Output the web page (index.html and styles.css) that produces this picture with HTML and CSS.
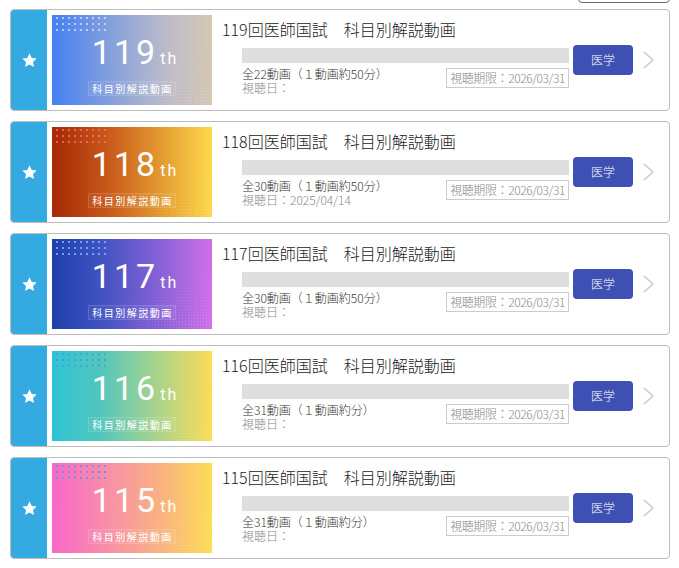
FILE: index.html
```html
<!DOCTYPE html>
<html lang="ja">
<head>
<meta charset="utf-8">
<title>科目別解説動画</title>
<link rel="stylesheet" href="styles.css">
</head>
<body>
<div class="toolbar"><div class="tool-btn"></div></div>
<ul class="list">
  <li class="card">
    <div class="fav"><svg viewBox="0 0 24 24" width="17" height="17"><path d="M12 1.8l3.1 6.6 7.1.8-5.3 4.9 1.4 7.1L12 17.6l-6.3 3.6 1.4-7.1L1.8 9.2l7.1-.8z" fill="#fff"/></svg></div>
    <div class="thumb t119">
      <div class="num">119<span class="th">th</span></div>
      <div class="label">科目別解説動画</div>
    </div>
    <div class="body">
      <div class="title">119回医師国試　科目別解説動画</div>
      <div class="row">
        <div class="main">
          <div class="bar"></div>
          <div class="info">
            <div class="meta">
              <div class="count">全22動画（１動画約50分）</div>
              <div class="viewed">視聴日：</div>
            </div>
            <div class="deadline">視聴期限：2026/03/31</div>
          </div>
        </div>
        <div class="btn">医学</div>
        <div class="chev"><svg viewBox="0 0 11 18" width="11" height="18"><polyline points="1,1 10,9 1,17" fill="none" stroke="#c9c9c9" stroke-width="1.5"/></svg></div>
      </div>
    </div>
  </li>
  <li class="card">
    <div class="fav"><svg viewBox="0 0 24 24" width="17" height="17"><path d="M12 1.8l3.1 6.6 7.1.8-5.3 4.9 1.4 7.1L12 17.6l-6.3 3.6 1.4-7.1L1.8 9.2l7.1-.8z" fill="#fff"/></svg></div>
    <div class="thumb t118">
      <div class="num">118<span class="th">th</span></div>
      <div class="label">科目別解説動画</div>
    </div>
    <div class="body">
      <div class="title">118回医師国試　科目別解説動画</div>
      <div class="row">
        <div class="main">
          <div class="bar"></div>
          <div class="info">
            <div class="meta">
              <div class="count">全30動画（１動画約50分）</div>
              <div class="viewed">視聴日：2025/04/14</div>
            </div>
            <div class="deadline">視聴期限：2026/03/31</div>
          </div>
        </div>
        <div class="btn">医学</div>
        <div class="chev"><svg viewBox="0 0 11 18" width="11" height="18"><polyline points="1,1 10,9 1,17" fill="none" stroke="#c9c9c9" stroke-width="1.5"/></svg></div>
      </div>
    </div>
  </li>
  <li class="card">
    <div class="fav"><svg viewBox="0 0 24 24" width="17" height="17"><path d="M12 1.8l3.1 6.6 7.1.8-5.3 4.9 1.4 7.1L12 17.6l-6.3 3.6 1.4-7.1L1.8 9.2l7.1-.8z" fill="#fff"/></svg></div>
    <div class="thumb t117">
      <div class="num">117<span class="th">th</span></div>
      <div class="label">科目別解説動画</div>
    </div>
    <div class="body">
      <div class="title">117回医師国試　科目別解説動画</div>
      <div class="row">
        <div class="main">
          <div class="bar"></div>
          <div class="info">
            <div class="meta">
              <div class="count">全30動画（１動画約50分）</div>
              <div class="viewed">視聴日：</div>
            </div>
            <div class="deadline">視聴期限：2026/03/31</div>
          </div>
        </div>
        <div class="btn">医学</div>
        <div class="chev"><svg viewBox="0 0 11 18" width="11" height="18"><polyline points="1,1 10,9 1,17" fill="none" stroke="#c9c9c9" stroke-width="1.5"/></svg></div>
      </div>
    </div>
  </li>
  <li class="card">
    <div class="fav"><svg viewBox="0 0 24 24" width="17" height="17"><path d="M12 1.8l3.1 6.6 7.1.8-5.3 4.9 1.4 7.1L12 17.6l-6.3 3.6 1.4-7.1L1.8 9.2l7.1-.8z" fill="#fff"/></svg></div>
    <div class="thumb t116">
      <div class="num">116<span class="th">th</span></div>
      <div class="label">科目別解説動画</div>
    </div>
    <div class="body">
      <div class="title">116回医師国試　科目別解説動画</div>
      <div class="row">
        <div class="main">
          <div class="bar"></div>
          <div class="info">
            <div class="meta">
              <div class="count">全31動画（１動画約分）</div>
              <div class="viewed">視聴日：</div>
            </div>
            <div class="deadline">視聴期限：2026/03/31</div>
          </div>
        </div>
        <div class="btn">医学</div>
        <div class="chev"><svg viewBox="0 0 11 18" width="11" height="18"><polyline points="1,1 10,9 1,17" fill="none" stroke="#c9c9c9" stroke-width="1.5"/></svg></div>
      </div>
    </div>
  </li>
  <li class="card">
    <div class="fav"><svg viewBox="0 0 24 24" width="17" height="17"><path d="M12 1.8l3.1 6.6 7.1.8-5.3 4.9 1.4 7.1L12 17.6l-6.3 3.6 1.4-7.1L1.8 9.2l7.1-.8z" fill="#fff"/></svg></div>
    <div class="thumb t115">
      <div class="num">115<span class="th">th</span></div>
      <div class="label">科目別解説動画</div>
    </div>
    <div class="body">
      <div class="title">115回医師国試　科目別解説動画</div>
      <div class="row">
        <div class="main">
          <div class="bar"></div>
          <div class="info">
            <div class="meta">
              <div class="count">全31動画（１動画約分）</div>
              <div class="viewed">視聴日：</div>
            </div>
            <div class="deadline">視聴期限：2026/03/31</div>
          </div>
        </div>
        <div class="btn">医学</div>
        <div class="chev"><svg viewBox="0 0 11 18" width="11" height="18"><polyline points="1,1 10,9 1,17" fill="none" stroke="#c9c9c9" stroke-width="1.5"/></svg></div>
      </div>
    </div>
  </li>
</ul>
</body>
</html>
```
FILE: styles.css
```css
html, body {
  margin: 0;
  padding: 0;
  background: #fff;
}
body {
  padding: 0 9px 0 10px;
  font-family: "Noto Sans CJK JP", "Noto Sans", sans-serif;
  font-weight: 300;
  color: #333;
}
.toolbar {
  height: 3px;
  display: flex;
  justify-content: flex-end;
}
.tool-btn {
  width: 92px;
  height: 30px;
  margin-top: -27px;
  box-sizing: border-box;
  border: 1px solid #666;
  border-radius: 4px;
}
.list {
  list-style: none;
  margin: 6px 0 0;
  padding: 0;
}
.card {
  display: flex;
  height: 102px;
  box-sizing: border-box;
  border: 1px solid #bdbdbd;
  border-radius: 4px;
  overflow: hidden;
  margin-bottom: 10px;
}
.fav {
  width: 36px;
  flex: none;
  background: #35aae1;
  display: flex;
  align-items: center;
  justify-content: center;
}
.fav svg { display: block; }
.thumb {
  position: relative;
  flex: none;
  width: 160px;
  height: 90px;
  margin: 5px 0 0 5px;
  overflow: hidden;
  display: flex;
  flex-direction: column;
  align-items: center;
  padding-top: 20px;
  box-sizing: border-box;
  color: #fff;
}
.thumb::before {
  content: "";
  position: absolute;
  left: 2px;
  top: 0;
  width: 52px;
  height: 17px;
  background-image: radial-gradient(circle, var(--dot) 0.8px, transparent 1.1px);
  background-size: 6px 6px;
  background-position: 0 0;
}
.thumb::after {
  content: "";
  position: absolute;
  right: 0;
  bottom: 0;
  width: 100px;
  height: 60px;
  background-image: radial-gradient(circle, rgba(255,255,255,0.22) 0.7px, transparent 1px);
  background-size: 3px 3px;
  -webkit-mask-image: radial-gradient(ellipse at 80% 100%, #000 0%, transparent 70%);
  mask-image: radial-gradient(ellipse at 80% 100%, #000 0%, transparent 70%);
}
.t119 {
  background: linear-gradient(90deg, #4580f2 0%, #8aa3da 40%, #bcbcc8 72%, #d6c7b3 100%);
  --dot: rgba(255,255,255,0.55);
}
.t118 {
  background: linear-gradient(90deg, #a42804 0%, #c8591a 35%, #e39a30 68%, #fdd94b 100%);
  --dot: rgba(255,110,110,0.75);
}
.t117 {
  background: linear-gradient(90deg, #1e3fab 0%, #3f52c0 30%, #8260d6 65%, #d070e8 100%);
  --dot: rgba(120,170,255,0.9);
}
.t116 {
  background: linear-gradient(90deg, #2ec3d6 0%, #52c6bd 30%, #a7d38c 65%, #fbdc56 100%);
  --dot: rgba(70,140,230,0.6);
}
.t115 {
  background: linear-gradient(90deg, #f868c8 0%, #f88fa8 35%, #f9b280 68%, #fddc55 100%);
  --dot: rgba(90,150,240,0.85);
}
.num {
  position: relative;
  z-index: 1;
  font-family: Roboto, "Noto Sans", sans-serif;
  font-weight: 400;
  font-size: 34px;
  line-height: 34px;
  letter-spacing: 3px;
  margin-left: 6px;
}
.th {
  font-size: 16px;
  letter-spacing: 2px;
  margin-left: 2px;
}
.label {
  position: relative;
  z-index: 1;
  margin-top: 5px;
  height: 15px;
  box-sizing: border-box;
  padding: 0 2px 0 3px;
  font-size: 10px;
  font-weight: 400;
  line-height: 13px;
  letter-spacing: 1.5px;
  border: 1px solid rgba(255,255,255,0.13);
  background: rgba(255,255,255,0.05);
}
.body {
  flex: 1;
  padding: 8px 0 0 10px;
  min-width: 0;
}
.title {
  font-size: 16px;
  line-height: 22px;
  color: #222;
  white-space: nowrap;
}
.row {
  display: flex;
  align-items: flex-start;
  margin: 5px 0 0 20px;
}
.main {
  width: 327px;
  flex: none;
}
.bar {
  margin-top: 3px;
  height: 15px;
  background: #dedede;
}
.info {
  margin-top: 4px;
  display: flex;
  justify-content: space-between;
  align-items: flex-start;
  font-size: 12px;
  line-height: 14px;
}
.count { color: #333; }
.viewed { color: #888; }
.deadline {
  margin-top: 1px;
  height: 20px;
  box-sizing: border-box;
  border: 1px solid #ccc;
  padding: 0 3px;
  line-height: 18px;
  letter-spacing: -0.4px;
  color: #888;
  white-space: nowrap;
}
.btn {
  flex: none;
  width: 60px;
  height: 30px;
  margin-left: 4px;
  border-radius: 4px;
  background: #3e50b4;
  color: #fff;
  font-size: 12px;
  line-height: 30px;
  text-align: center;
}
.chev {
  flex: none;
  margin: 6px 0 0 10px;
}
.chev svg { display: block; }
```
